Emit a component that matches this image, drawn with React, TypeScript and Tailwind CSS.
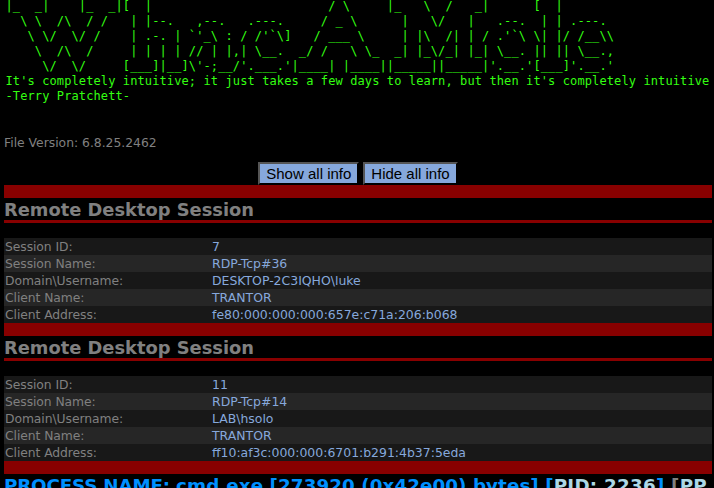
const banner = [
  String.raw`|_  _|    |_  _|[  |                        / \     |_   \  /   _|      [  |`,
  String.raw`  \ \  /\  / /   | |--.   ,--.   .---.     / _ \      |   \/   |   .--.  | | .---.`,
  String.raw`   \ \/  \/ /    | .-. | ${"`"}'_\ : / /'${"`"}\]   / ___ \     | |\  /| | / .'${"`"}\ \| |/ /__\\`,
  String.raw`    \  /\  /     | | | | // | |,| \__.  _/ /   \ \_  _| |_\/_| |_| \__. || || \__.,`,
  String.raw`     \/  \/     [___]|__]\'-;__/'.___.'|____| |____||_____||_____|'.__.'[___]'.__.'`,
  "It's completely intuitive; it just takes a few days to learn, but then it's completely intuitive",
  "-Terry Pratchett-",
].join("\n");

type Row = { label: string; value: string };

const sessions: Row[][] = [
  [
    { label: "Session ID:", value: "7" },
    { label: "Session Name:", value: "RDP-Tcp#36" },
    { label: "Domain\\Username:", value: "DESKTOP-2C3IQHO\\luke" },
    { label: "Client Name:", value: "TRANTOR" },
    { label: "Client Address:", value: "fe80:000:000:000:657e:c71a:206:b068" },
  ],
  [
    { label: "Session ID:", value: "11" },
    { label: "Session Name:", value: "RDP-Tcp#14" },
    { label: "Domain\\Username:", value: "LAB\\hsolo" },
    { label: "Client Name:", value: "TRANTOR" },
    { label: "Client Address:", value: "ff10:af3c:000:000:6701:b291:4b37:5eda" },
  ],
];

function InfoButton({ children }: { children: string }) {
  return (
    <button className="h-[23px] border-2 border-t-[#555] border-l-[#555] border-r-black border-b-black bg-[#86a8dc] px-1.5 font-['Liberation_Sans',Arial,sans-serif] text-[15px] leading-[19px] whitespace-nowrap text-black">
      {children}
    </button>
  );
}

function Session({ rows }: { rows: Row[] }) {
  return (
    <section>
      <div className="h-[13px] bg-[#880000]" />
      <h2 className="h-[25px] border-b-[3px] border-[#880000] pt-px text-[17.85px] leading-[22px] font-bold whitespace-nowrap">
        Remote Desktop Session
      </h2>
      <dl className="pt-[15px]">
        {rows.map((row) => (
          <div key={row.label} className="flex h-[17px] bg-[#181818] pt-px pl-px leading-[17px] whitespace-nowrap even:bg-[#262626]">
            <dt className="w-[207px] tracking-[-0.07px]">{row.label}</dt>
            <dd className="text-[12.45px] leading-[15px] text-[#86a8dc]">{row.value}</dd>
          </div>
        ))}
      </dl>
    </section>
  );
}

export default function App() {
  return (
    <main className="h-[488px] w-[714px] overflow-hidden bg-black pr-0.5 pl-1 font-['DejaVu_Sans',Verdana,sans-serif] text-[12.35px] text-[#808080]">
      <pre className="-mt-px h-[136px] pl-[1.5px] font-['DejaVu_Sans_Mono',monospace] text-[12px] leading-[15px] tracking-[0.108px] text-[#33ff11]">
        {banner}
      </pre>
      <p className="h-[27px] leading-[17px]">File Version: 6.8.25.2462</p>
      <div className="flex h-[23px] justify-center gap-1">
        <InfoButton>Show all info</InfoButton>
        <InfoButton>Hide all info</InfoButton>
      </div>
      {sessions.map((rows, i) => (
        <Session key={i} rows={rows} />
      ))}
      <div className="h-[13px] bg-[#880000]" />
      <h2 className="text-[18.3px] leading-[23px] font-bold whitespace-nowrap text-[#0090ff]">
        <span className="tracking-[-0.18px]">PROCESS NAME: </span>
        <span className="tracking-[0.08px]">cmd.exe [273920 (0x42e00) bytes] [</span>
        <span className="tracking-[0.25px]">
          <span className="text-[#add8e6]">PID: 2236</span>]{" "}
          <span className="text-[#808080]">[</span>
          <span className="text-[#add8e6]">PP</span>
        </span>
      </h2>
    </main>
  );
}
